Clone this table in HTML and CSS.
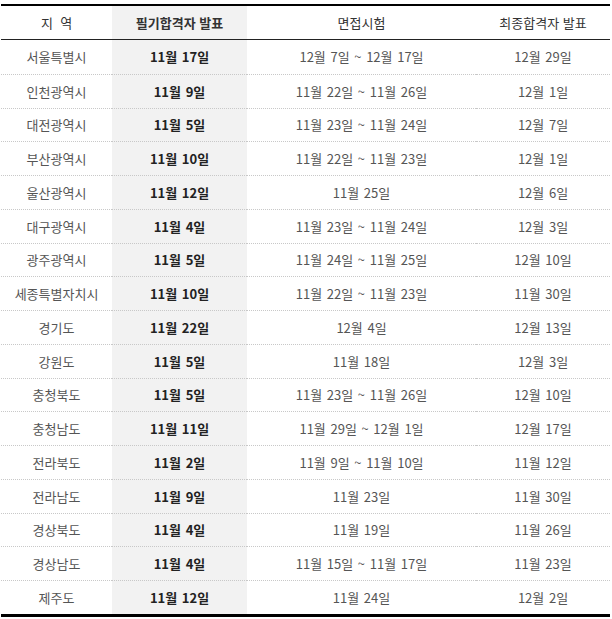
FILE: index.html
```html
<!DOCTYPE html>
<html lang="ko">
<head>
<meta charset="utf-8">
<link rel="stylesheet" href="styles.css">
</head>
<body>
<table class="sched">
  <colgroup>
    <col class="c1"><col class="c2"><col class="c3"><col class="c4">
  </colgroup>
  <thead>
    <tr><th>지 &nbsp;역</th><th class="hl">필기합격자 발표</th><th>면접시험</th><th>최종합격자 발표</th></tr>
  </thead>
  <tbody>
    <tr><td>서울특별시</td><td class="hl">11월 17일</td><td>12월 7일 ~ 12월 17일</td><td>12월 29일</td></tr>
    <tr><td>인천광역시</td><td class="hl">11월 9일</td><td>11월 22일 ~ 11월 26일</td><td>12월 1일</td></tr>
    <tr><td>대전광역시</td><td class="hl">11월 5일</td><td>11월 23일 ~ 11월 24일</td><td>12월 7일</td></tr>
    <tr><td>부산광역시</td><td class="hl">11월 10일</td><td>11월 22일 ~ 11월 23일</td><td>12월 1일</td></tr>
    <tr><td>울산광역시</td><td class="hl">11월 12일</td><td>11월 25일</td><td>12월 6일</td></tr>
    <tr><td>대구광역시</td><td class="hl">11월 4일</td><td>11월 23일 ~ 11월 24일</td><td>12월 3일</td></tr>
    <tr><td>광주광역시</td><td class="hl">11월 5일</td><td>11월 24일 ~ 11월 25일</td><td>12월 10일</td></tr>
    <tr><td>세종특별자치시</td><td class="hl">11월 10일</td><td>11월 22일 ~ 11월 23일</td><td>11월 30일</td></tr>
    <tr><td>경기도</td><td class="hl">11월 22일</td><td>12월 4일</td><td>12월 13일</td></tr>
    <tr><td>강원도</td><td class="hl">11월 5일</td><td>11월 18일</td><td>12월 3일</td></tr>
    <tr><td>충청북도</td><td class="hl">11월 5일</td><td>11월 23일 ~ 11월 26일</td><td>12월 10일</td></tr>
    <tr><td>충청남도</td><td class="hl">11월 11일</td><td>11월 29일 ~ 12월 1일</td><td>12월 17일</td></tr>
    <tr><td>전라북도</td><td class="hl">11월 2일</td><td>11월 9일 ~ 11월 10일</td><td>11월 12일</td></tr>
    <tr><td>전라남도</td><td class="hl">11월 9일</td><td>11월 23일</td><td>11월 30일</td></tr>
    <tr><td>경상북도</td><td class="hl">11월 4일</td><td>11월 19일</td><td>11월 26일</td></tr>
    <tr><td>경상남도</td><td class="hl">11월 4일</td><td>11월 15일 ~ 11월 17일</td><td>11월 23일</td></tr>
    <tr><td>제주도</td><td class="hl">11월 12일</td><td>11월 24일</td><td>12월 2일</td></tr>
  </tbody>
</table>
</body>
</html>
```

FILE: styles.css
```css
html, body {
  margin: 0;
  padding: 0;
  background: #fff;
}
body {
  padding: 4px 0 0 1px;
  font-family: "Noto Sans CJK KR", "Noto Sans", sans-serif;
  font-size: 13px;
  color: #555;
}
.sched {
  width: 609px;
  border-collapse: collapse;
  table-layout: fixed;
  border-top: 2px solid #000;
  border-bottom: 3px solid #000;
}
.c1 { width: 111px; }
.c2 { width: 135px; }
.c3 { width: 229px; }
.c4 { width: 134px; }
.sched th,
.sched td {
  padding: 0;
  text-align: center;
  vertical-align: middle;
  white-space: nowrap;
}
.sched th {
  height: 33px;
  font-weight: bold;
  color: #333;
  border-bottom: 1px solid #222;
}
.sched td {
  height: 32.76px;
  border-top: 1px dotted #c8c8c8;
  word-spacing: 1px;
}
.sched tbody tr:first-child td {
  border-top: none;
  height: 33.76px;
}
.sched th:first-child,
.sched th:nth-child(3),
.sched th:nth-child(4) {
  font-weight: normal;
}
.sched .hl {
  background: #f2f2f2;
}
.sched td.hl {
  font-weight: bold;
  color: #222;
}
```
